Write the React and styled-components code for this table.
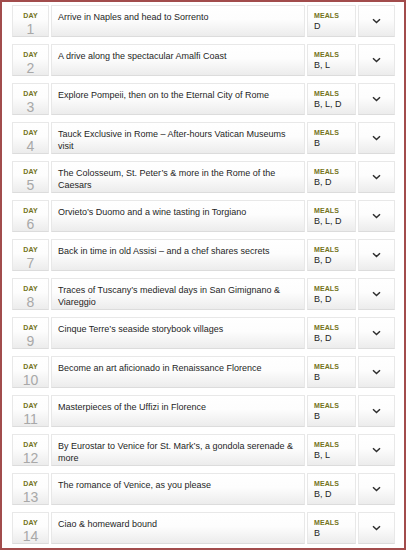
import styled, { createGlobalStyle } from 'styled-components'

const days = [
  { title: 'Arrive in Naples and head to Sorrento', meals: 'D' },
  { title: 'A drive along the spectacular Amalfi Coast', meals: 'B, L' },
  { title: 'Explore Pompeii, then on to the Eternal City of Rome', meals: 'B, L, D' },
  { title: 'Tauck Exclusive in Rome – After-hours Vatican Museums visit', meals: 'B' },
  { title: 'The Colosseum, St. Peter’s & more in the Rome of the Caesars', meals: 'B, D' },
  { title: 'Orvieto’s Duomo and a wine tasting in Torgiano', meals: 'B, L, D' },
  { title: 'Back in time in old Assisi – and a chef shares secrets', meals: 'B, D' },
  { title: 'Traces of Tuscany’s medieval days in San Gimignano & Viareggio', meals: 'B, D' },
  { title: 'Cinque Terre’s seaside storybook villages', meals: 'B, D' },
  { title: 'Become an art aficionado in Renaissance Florence', meals: 'B' },
  { title: 'Masterpieces of the Uffizi in Florence', meals: 'B' },
  { title: 'By Eurostar to Venice for St. Mark’s, a gondola serenade & more', meals: 'B, L' },
  { title: 'The romance of Venice, as you please', meals: 'B, D' },
  { title: 'Ciao & homeward bound', meals: 'B' },
]

const GlobalStyle = createGlobalStyle`
  html, body {
    margin: 0;
    padding: 0;
    background: #fff;
  }
  body {
    font-family: "Liberation Sans", Arial, sans-serif;
  }
`

const Frame = styled.div`
  box-sizing: border-box;
  width: 406px;
  height: 550px;
  border: 2px solid #a24c4c;
  padding: 3px 0 0 10px;
  display: flex;
  flex-direction: column;
  gap: 7px;
  overflow: hidden;
`

const Row = styled.div`
  display: grid;
  grid-template-columns: 37px 254px 49px 37px;
  column-gap: 2px;
  height: 32px;
`

const Cell = styled.div`
  box-sizing: border-box;
  border: 1px solid #e8e8e8;
  border-bottom-color: #dcdcdc;
  background: linear-gradient(#ffffff 0%, #fdfdfd 45%, #ececec 100%);
`

const DayCell = styled(Cell)`
  display: flex;
  flex-direction: column;
  align-items: center;
  padding-top: 6px;
`

const Label = styled.span`
  font-size: 7px;
  line-height: 8px;
  font-weight: bold;
  color: #737320;
  letter-spacing: 0.1px;
`

const DayNum = styled.span`
  font-size: 14px;
  line-height: 14px;
  margin-top: 2px;
  color: #a8a8a8;
`

const TitleCell = styled(Cell)`
  padding: 5px 8px 0 6px;
  font-size: 9px;
  line-height: 12px;
  color: #1e1e1e;
`

const MealsCell = styled(Cell)`
  display: flex;
  flex-direction: column;
  padding: 6px 0 0 6px;
`

const MealsValue = styled.span`
  font-size: 9px;
  line-height: 10px;
  margin-top: 1px;
  color: #1e1e1e;
`

const ToggleCell = styled(Cell)`
  display: flex;
  align-items: center;
  justify-content: center;
`

const Chevron = () => (
  <svg width="9" height="6" viewBox="0 0 9 6">
    <polyline points="1,1.2 4.5,4.5 8,1.2" fill="none" stroke="#2e2e2e" strokeWidth="1.5" />
  </svg>
)

const DayRow = ({ day, title, meals }) => (
  <Row>
    <DayCell>
      <Label>DAY</Label>
      <DayNum>{day}</DayNum>
    </DayCell>
    <TitleCell>{title}</TitleCell>
    <MealsCell>
      <Label>MEALS</Label>
      <MealsValue>{meals}</MealsValue>
    </MealsCell>
    <ToggleCell>
      <Chevron />
    </ToggleCell>
  </Row>
)

const App = () => (
  <>
    <GlobalStyle />
    <Frame>
      {days.map((d, i) => (
        <DayRow key={i} day={i + 1} title={d.title} meals={d.meals} />
      ))}
    </Frame>
  </>
)

export default App
